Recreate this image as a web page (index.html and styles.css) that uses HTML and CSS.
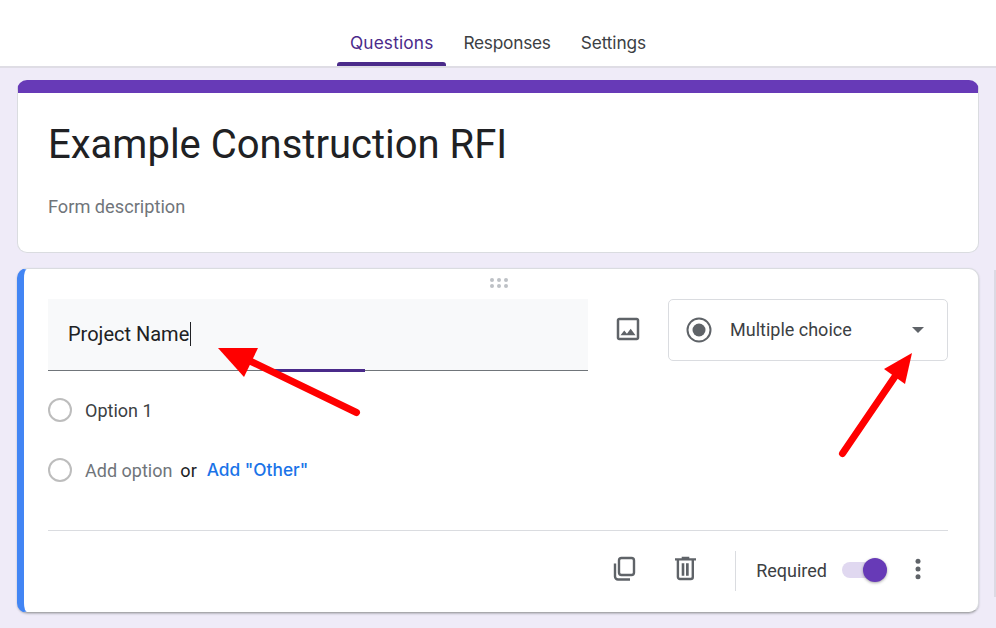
FILE: index.html
```html
<!DOCTYPE html>
<html lang="en">
<head>
<meta charset="utf-8">
<title>Example Construction RFI</title>
<link rel="stylesheet" href="styles.css">
</head>
<body>
<header class="tabs">
  <a class="tab tab-active">Questions</a>
  <a class="tab tab-responses">Responses</a>
  <a class="tab">Settings</a>
</header>
<main class="page">
  <section class="card title-card">
    <h1 class="form-title">Example Construction RFI</h1>
    <p class="form-desc">Form description</p>
  </section>
  <section class="card question-card">
    <div class="drag">
      <svg width="20" height="12" viewBox="0 0 20 12" fill="#bdc1c6"><circle cx="3" cy="3" r="2"/><circle cx="10" cy="3" r="2"/><circle cx="17" cy="3" r="2"/><circle cx="3" cy="9" r="2"/><circle cx="10" cy="9" r="2"/><circle cx="17" cy="9" r="2"/></svg>
    </div>
    <div class="q-top">
      <div class="q-input">
        <span class="q-text">Project Name</span><span class="caret"></span>
        <span class="focus-line"></span>
      </div>
      <svg class="img-icon" width="30" height="30" viewBox="0 0 24 24" fill="#5f6368"><path d="M19 5v14H5V5h14m0-2H5c-1.100 0-2 .9-2 2v14c0 1.100.9 2 2 2h14c1.100 0 2-.9 2-2V5c0-1.100-.9-2-2-2zm-4.860 8.860-3 3.870L9 13.140 6 17h12l-3.860-5.140z"/></svg>
      <div class="type-select">
        <svg width="26" height="26" viewBox="0 0 26 26"><circle cx="13" cy="13" r="11.500" fill="none" stroke="#5f6368" stroke-width="2"/><circle cx="13" cy="13" r="6.500" fill="#5f6368"/></svg>
        <span class="type-label">Multiple choice</span>
        <span class="type-arrow"></span>
      </div>
    </div>
    <div class="option first-option">
      <span class="radio"></span><span class="opt-text">Option 1</span>
    </div>
    <div class="option">
      <span class="radio"></span><span class="opt-add">Add option</span><span class="opt-or">or</span><span class="opt-other">Add "Other"</span>
    </div>
    <div class="q-footer">
      <svg class="foot-icon" width="28" height="28" viewBox="0 0 28 28" fill="none" stroke="#5f6368" stroke-width="2.400"><rect x="8" y="3" width="15" height="17" rx="2.500"/><path d="M4 8.500V21.500a3 3 0 0 0 3 3H19"/></svg>
      <svg class="foot-icon trash" width="28" height="28" viewBox="0 0 28 28" fill="#5f6368"><path d="M10.700 1.700h7.600V3.200H25V5.500H4V3.200h6.700z"/><path d="M6.900 5V22a2 2 0 0 0 2 2H19.800a2 2 0 0 0 2-2V5" fill="none" stroke="#5f6368" stroke-width="2.400"/><path d="M10.700 8.300h2.600v12.400h-2.600zM15 8.300h2.700v12.400H15z"/></svg>
      <span class="foot-sep"></span>
      <span class="req-label">Required</span>
      <span class="switch"><span class="knob"></span></span>
      <svg class="more" width="24" height="24" viewBox="0 0 24 24" fill="#5f6368"><circle cx="12" cy="4.300" r="2.500"/><circle cx="12" cy="12" r="2.500"/><circle cx="12" cy="19.700" r="2.500"/></svg>
    </div>
  </section>
</main>
<div class="side-toolbar"></div>
<svg class="arrows" width="996" height="628" viewBox="0 0 996 628" fill="#ff0000" stroke="none">
  <line x1="356.500" y1="412.500" x2="250" y2="361" stroke="#ff0000" stroke-width="7" stroke-linecap="round"/>
  <polygon points="218,348 258,348 244,377"/>
  <line x1="842.500" y1="453.500" x2="896" y2="375" stroke="#ff0000" stroke-width="7" stroke-linecap="round"/>
  <polygon points="912,353 884,369 905,384"/>
</svg>
</body>
</html>
```

FILE: styles.css
```css
* { box-sizing: border-box; }
html, body { margin: 0; height: 100%; }
body {
  width: 996px;
  height: 628px;
  overflow: hidden;
  position: relative;
  background: #efebf8;
  font-family: Roboto, "Liberation Sans", sans-serif;
  color: #202124;
}
.tabs {
  height: 68px;
  background: #fff;
  border-bottom: 2px solid #dfdde5;
  display: flex;
  justify-content: center;
}
.tab {
  font-family: Inter, "Open Sans", sans-serif;
  font-size: 17.300px;
  letter-spacing: -0.1px;
  color: #3c4043;
  height: 66px;
  padding: 34px 13px 0;
  margin: 0 2px;
  line-height: 18px;
  position: relative;
}
.tab-responses { letter-spacing: -0.25px; }
.tab-active { color: #4a2a8a; letter-spacing: 0.15px; }
.tab-active::after {
  content: "";
  position: absolute;
  left: 0;
  right: 0;
  bottom: 0;
  height: 4px;
  background: #4a2a8a;
  border-radius: 3px 3px 0 0;
}
.page {
  padding: 12px 17px 0;
  display: flex;
  flex-direction: column;
  gap: 15px;
}
.card {
  width: 962px;
  background: #fff;
  border-radius: 10px;
  border: 1px solid #dadce0;
}
.title-card {
  height: 173px;
  border-top: 13px solid #673ab7;
  padding: 30px 30px 0;
}
.form-title {
  margin: 0;
  font-weight: 400;
  font-size: 40px;
  line-height: 44px;
  color: #202124;
}
.form-desc {
  margin: 29px 0 0;
  font-size: 18.200px;
  line-height: 22px;
  color: #70757a;
}
.question-card {
  height: 345px;
  border-left: 7px solid #4285f4;
  border-bottom: 1px solid #a9a9ad;
  box-shadow: 0 1px 2px rgba(60, 64, 67, .3);
  padding: 0 30px 0 24px;
}
.drag { height: 30px; padding: 8px 0 0 441px; line-height: 0; }
.q-top { display: flex; align-items: flex-start; }
.q-input {
  position: relative;
  width: 540px;
  height: 72px;
  background: #f8f9fa;
  border-bottom: 1px solid #70757a;
  padding: 23px 0 0 20px;
  font-size: 20px;
  line-height: 24px;
  display: flex;
  align-items: flex-start;
}
.caret { width: 1px; height: 24px; background: #202124; margin-left: 1px; }
.focus-line {
  position: absolute;
  left: 223px;
  bottom: -2px;
  width: 94px;
  height: 3px;
  background: #4a2a8a;
}
.img-icon { margin: 15px 0 0 25px; flex: none; }
.type-select {
  margin-left: 25px;
  width: 280px;
  height: 62px;
  border: 1px solid #dadce0;
  border-radius: 5px;
  display: flex;
  align-items: center;
  padding: 0 23px 0 17px;
}
.type-label { font-size: 18px; margin-left: 18px; flex: 1; color: #3c4043; padding-bottom: 1px; }
.type-arrow {
  width: 0;
  height: 0;
  border-left: 6px solid transparent;
  border-right: 6px solid transparent;
  border-top: 6px solid #5f6368;
}
.option { display: flex; align-items: center; height: 26px; font-size: 18px; }
.first-option { margin-top: 26px; margin-bottom: 34px; }
.radio {
  width: 24px;
  height: 24px;
  border: 2px solid #bdbdbd;
  border-radius: 50%;
  flex: none;
  margin-right: 13px;
}
.opt-text { color: #3c4043; }
.opt-add { color: #70757a; }
.opt-or { margin-left: 8px; color: #202124; }
.opt-other {
  margin: 0 0 2px 10px;
  font-family: Inter, Roboto, sans-serif;
  color: #1a73e8;
  font-weight: 500;
  font-size: 17.300px;
}
.q-footer {
  margin-top: 47px;
  border-top: 1px solid #dadce0;
  height: 79px;
  display: flex;
  align-items: center;
  justify-content: flex-end;
}
.foot-icon { flex: none; margin-bottom: 3px; }
.trash { margin-left: 32px; }
.foot-sep { width: 1px; height: 40px; background: #dadce0; margin: 2px 20px 0 36px; }
.req-label { font-size: 18px; color: #3c4043; }
.switch {
  position: relative;
  width: 45px;
  height: 16px;
  background: #e0d8f0;
  border-radius: 8px;
  margin-left: 15px;
}
.knob {
  position: absolute;
  right: 0;
  top: -4px;
  width: 24px;
  height: 24px;
  border-radius: 50%;
  background: #673ab7;
  box-shadow: 0 1px 3px rgba(0, 0, 0, .35);
}
.more { margin: 0 18px 3px 19px; flex: none; }
.side-toolbar {
  position: absolute;
  left: 994px;
  top: 270px;
  width: 2px;
  height: 327px;
  border-left: 2px solid #dcdae4;
}
.arrows { position: absolute; left: 0; top: 0; pointer-events: none; }
```
